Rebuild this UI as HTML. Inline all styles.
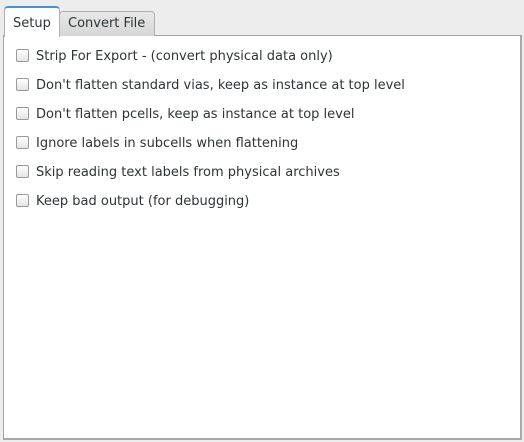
<!DOCTYPE html>
<html><head><style>
body{margin:0;width:524px;height:442px;background:#ededed;font-family:"DejaVu Sans","Liberation Sans",sans-serif;font-size:13px;color:#2e3436;position:relative;overflow:hidden}
.panel{position:absolute;left:3px;top:35px;width:516px;height:402px;background:#fff;border:1px solid #a5a5a5;border-right:2px solid #a8a8a8;border-bottom:2px solid #a8a8a8}
.tab{position:absolute;box-sizing:border-box;border:1px solid #b0b0b0;border-bottom:none;border-radius:4px 4px 0 0}
.t1{left:4px;top:6px;width:56px;height:31px;background:#fff;padding:8px 0 0 8px;border-top:2px solid #4a90d9;z-index:2}
.t2{left:59px;top:11px;width:96px;height:25px;background:linear-gradient(#e8e8e8,#d6d6d6);padding:4px 0 0 8px}
.row{position:absolute;left:16px;height:16px;line-height:16px}
.cb{display:inline-block;box-sizing:border-box;width:13px;height:13px;border:1px solid #9a9a9a;border-radius:2px;background:linear-gradient(#fff,#e4e4e4);vertical-align:-2px;margin-right:7px}
</style></head><body>
<div class="panel"></div>
<div class="tab t1">Setup</div>
<div class="tab t2">Convert File</div>
<div class="row" style="top:49px"><span class="cb"></span>Strip For Export - (convert physical data only)</div>
<div class="row" style="top:78px"><span class="cb"></span>Don't flatten standard vias, keep as instance at top level</div>
<div class="row" style="top:107px"><span class="cb"></span>Don't flatten pcells, keep as instance at top level</div>
<div class="row" style="top:136px"><span class="cb"></span>Ignore labels in subcells when flattening</div>
<div class="row" style="top:165px"><span class="cb"></span>Skip reading text labels from physical archives</div>
<div class="row" style="top:194px"><span class="cb"></span>Keep bad output (for debugging)</div>
</body></html>
